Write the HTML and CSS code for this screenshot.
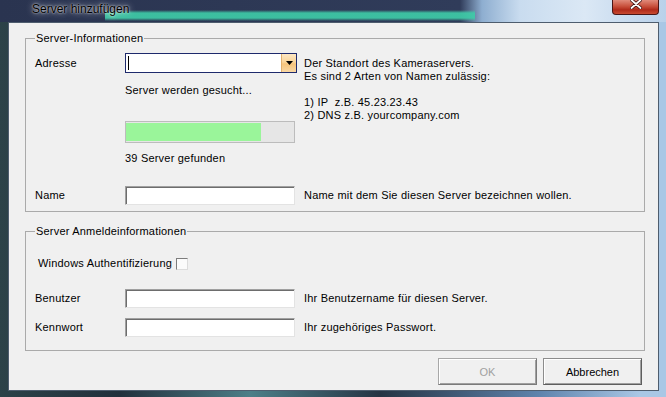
FILE: index.html
```html
<!DOCTYPE html>
<html lang="de">
<head>
  <meta charset="UTF-8" />
  <title>Server hinzufügen</title>
  <link rel="stylesheet" href="styles.css">
</head>
<body>
  <div class="window">
    <div class="titlebar">
      <span class="title">Server hinzufügen</span>
      <span class="close-btn">
        <svg width="12" height="9" viewBox="0 0 12 9">
          <path d="M1.5 0 L10.5 8 M10.5 0 L1.5 8" stroke="#3a1010" stroke-width="3.4" stroke-linecap="round" />
          <path d="M1.5 0 L10.5 8 M10.5 0 L1.5 8" stroke="#fff" stroke-width="1.8" stroke-linecap="round" />
        </svg>
      </span>
    </div>

    <div class="client">
      <fieldset class="group group-info">
        <legend>Server-Informationen</legend>
        <div class="row row-address">
          <label>Adresse</label>
          <div class="combo">
            <span class="caret"></span>
            <span class="combo-btn">
              <svg width="7" height="4" viewBox="0 0 7 4"><path d="M0 0 H7 L3.5 4 Z" fill="#000" /></svg>
            </span>
          </div>
          <p class="help help-block">
            Der Standort des Kameraservers.<br>
            Es sind 2 Arten von Namen zulässig:<br>
            <br>
            1) IP&nbsp; z.B. 45.23.23.43<br>
            2) DNS z.B. yourcompany.com
          </p>
        </div>
        <div class="status">Server werden gesucht...</div>
        <div class="progress"><div class="progress-fill" style="width:135px"></div></div>
        <div class="found">39 Server gefunden</div>
        <div class="row row-name">
          <label>Name</label>
          <input class="text-input" type="text">
          <span class="help">Name mit dem Sie diesen Server bezeichnen wollen.</span>
        </div>
      </fieldset>

      <fieldset class="group group-login">
        <legend>Server Anmeldeinformationen</legend>
        <div class="check-row">
          <span>Windows Authentifizierung</span>
          <span class="checkbox"></span>
        </div>
        <div class="row row-user">
          <label>Benutzer</label>
          <input class="text-input" type="text">
          <span class="help">Ihr Benutzername für diesen Server.</span>
        </div>
        <div class="row row-pass">
          <label>Kennwort</label>
          <input class="text-input" type="password">
          <span class="help">Ihr zugehöriges Passwort.</span>
        </div>
      </fieldset>

      <div class="buttons">
        <button class="btn" disabled>OK</button>
        <button class="btn">Abbrechen</button>
      </div>
    </div>
  </div>
</body>
</html>
```

FILE: styles.css
```css
body { margin: 0; font-family: "Liberation Sans", Arial, sans-serif; font-size: 11px; letter-spacing: 0.2px; color: #000; }

.window {
  width: 666px;
  height: 397px;
  overflow: hidden;
  background:
    linear-gradient(180deg, rgba(0,0,0,0) 10px, rgba(62,205,168,.9) 13px, rgba(62,205,168,.9) 18px, rgba(0,0,0,0) 21px) 105px 0 / 370px 22px no-repeat,
    linear-gradient(90deg, #2a3450 0, #303c5a 460px, #8eaed0 482px, #c9dcef 520px, #dbe8f5 585px, #b9d1ea 666px) 0 0 / 100% 22px no-repeat,
    linear-gradient(90deg, #2c4248 0, #22303c 120px, #4d7f88 250px, #263444 380px, #5f84ad 540px, #a9c7e5 640px);
}

.titlebar { height: 22px; display: flex; align-items: flex-start; }
.title {
  margin: 2px 0 0 32px;
  font-size: 12px;
  line-height: 15px;
  letter-spacing: 0;
  text-shadow: 0 0 6px rgba(255,255,255,.85), 0 0 2px rgba(255,255,255,.9);
}
.close-btn {
  margin-left: auto;
  margin-right: 7px;
  width: 45px;
  height: 14px;
  display: flex;
  justify-content: center;
  align-items: flex-start;
  border: 1px solid #4a1616;
  border-top: none;
  border-radius: 0 0 4px 4px;
  background: linear-gradient(180deg, #e08a7a 0, #c8503c 45%, #b02a1a 70%, #c84a30 100%);
}

.client {
  height: 369px;
  box-sizing: border-box;
  margin: 0 7px 0 8px;
  padding: 9px 13px 0 16px;
  background: #f0f0f0;
  border: 1px solid #4e5d6e;
}

.group { margin: 0; padding: 8px 9px 6px; border: 1px solid #aaaaaa; min-width: 0; }
.group legend { padding: 0 1px; line-height: 13px; }
.group-login { margin-top: 13px; padding-bottom: 13px; }

.row { display: grid; grid-template-columns: 90px 172px auto; align-items: center; }
.row label { line-height: 13px; }
.help { margin-left: 7px; line-height: 13px; white-space: nowrap; }

.row-address { height: 20px; align-items: start; }
.row-address label { line-height: 20px; }
.help-block { margin-top: 0; margin-bottom: 0; padding-top: 4px; }

.combo {
  height: 20px;
  box-sizing: border-box;
  display: flex;
  align-items: center;
  background: #fff;
  border: 1px solid #1e2a6c;
}
.caret { width: 1px; height: 14px; margin-left: 2px; background: #000; }
.combo-btn {
  margin-left: auto;
  width: 14px;
  height: 18px;
  display: flex;
  align-items: center;
  justify-content: center;
  border-left: 1px solid #e2b06e;
  background: linear-gradient(180deg, #fde7c4 0, #fad59a 45%, #f6c47c 55%, #f8d7a4 100%);
}

.status { margin-top: 11px; padding-left: 90px; line-height: 13px; }
.progress {
  width: 170px;
  height: 22px;
  box-sizing: border-box;
  margin: 24px 0 0 90px;
  padding: 1px 0;
  background: #e6e6e6;
  border: 1px solid #bcbcbc;
}
.progress-fill { height: 100%; background: #9af59a; }
.found { margin-top: 9px; padding-left: 90px; line-height: 13px; }
.row-name { margin-top: 21px; }

.text-input {
  width: 170px;
  height: 19px;
  box-sizing: border-box;
  margin: 0;
  padding: 0 2px;
  font: inherit;
  background: #fff;
  border: 1px solid;
  border-color: #a0a0a0 #e3e3e3 #e3e3e3 #a0a0a0;
  box-shadow: inset 1px 1px 0 #6d6d6d;
  outline: none;
}

.check-row { display: flex; align-items: center; gap: 4px; height: 13px; margin-top: 11px; padding-left: 3px; line-height: 13px; }
.checkbox {
  width: 12px;
  height: 12px;
  box-sizing: border-box;
  background: #fbfbfb;
  border: 1px solid;
  border-color: #7d7d7d #dcdcdc #dcdcdc #7d7d7d;
}
.row-user { margin-top: 19px; }
.row-pass { margin-top: 10px; }

.buttons { display: flex; justify-content: flex-end; gap: 6px; margin: 7px 3px 0 0; }
.btn {
  width: 99px;
  height: 27px;
  padding: 0;
  font: inherit;
  color: #000;
  background: #f0f0f0;
  border: 1px solid;
  border-color: #8c8c8c #5e5e5e #5e5e5e #8c8c8c;
  box-shadow: inset 1px 1px 0 #fff, inset -1px -1px 0 #a0a0a0;
}
.btn:disabled { color: #a0a0a0; border-color: #a8a8a8 #7a7a7a #7a7a7a #a8a8a8; }
```
